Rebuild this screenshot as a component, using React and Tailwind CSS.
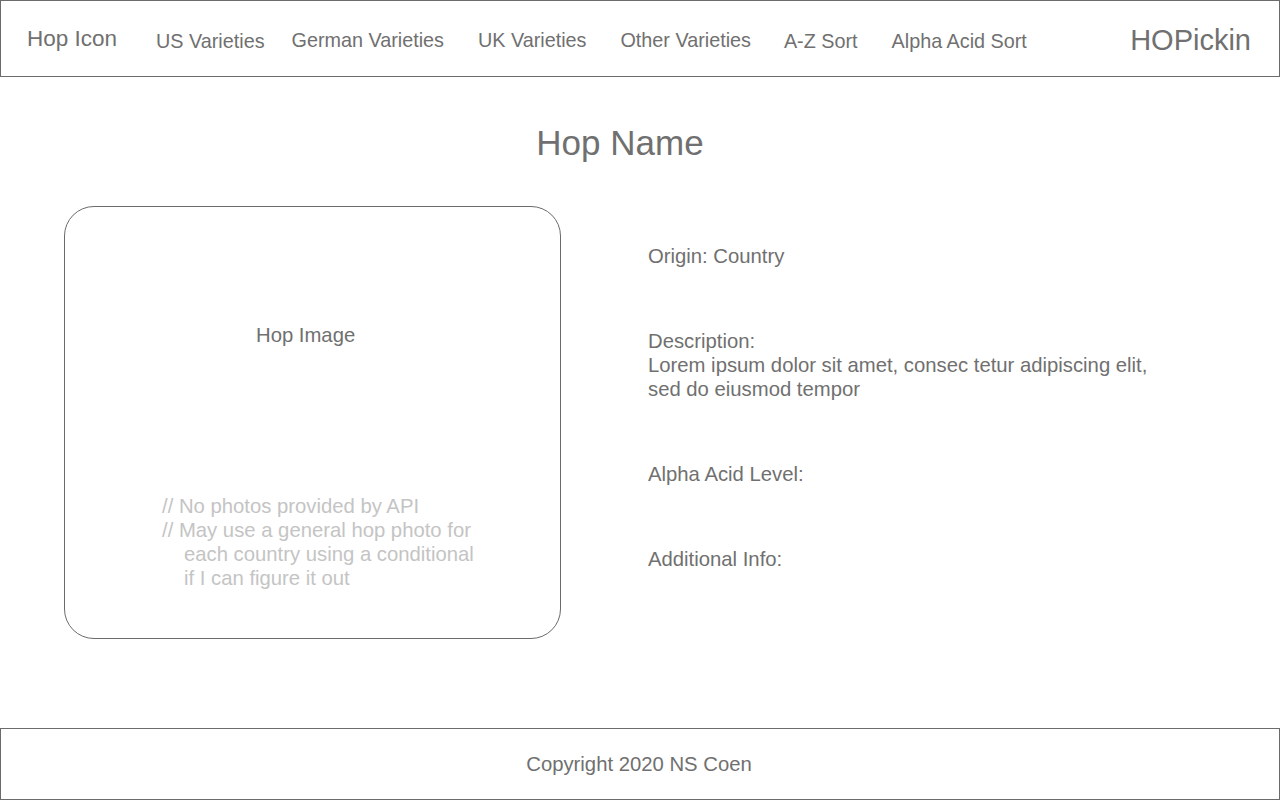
export default function App() {
  const font = { fontFamily: '"Liberation Sans", Arial, sans-serif' };
  return (
    <div className="w-[1280px] h-[800px] bg-white flex flex-col text-[#707070]" style={font}>
      <header className="h-[77px] border border-[#6b6b6b] flex items-center pl-[26px] pr-[28px]">
        <span className="text-[22.5px] leading-none mt-[2px]">Hop Icon</span>
        <nav className="flex items-center ml-[39px] text-[19.8px] leading-none mt-[4px]">
          <span className="mt-[2px]">US Varieties</span>
          <span className="ml-[27px]">German Varieties</span>
          <span className="ml-[34px]">UK Varieties</span>
          <span className="ml-[34px]">Other Varieties</span>
          <span className="ml-[33px] mt-[2px]">A-Z Sort</span>
          <span className="ml-[34px] mt-[2px]">Alpha Acid Sort</span>
        </nav>
        <span className="ml-auto text-[29px] leading-none mt-[3px]">HOPickin</span>
      </header>

      <main className="flex-1 flex flex-col">
        <h1 className="text-[35px] leading-none text-center mt-[48px] pr-[40px]">Hop Name</h1>
        <div className="flex mt-[46px]">
          <div className="ml-[64px] w-[497px] h-[433px] rounded-[30px] border border-[#6b6b6b] flex flex-col">
            <div className="text-[20.3px] leading-[24px] pl-[191px] mt-[116px]">Hop Image</div>
            <div className="text-[20.3px] leading-[24px] text-[#c4c4c4] pl-[97px] mt-[147px]">
              <div>// No photos provided by API</div>
              <div>// May use a general hop photo for</div>
              <div className="pl-[22px]">each country using a conditional</div>
              <div className="pl-[22px]">if I can figure it out</div>
            </div>
          </div>
          <div className="ml-[87px] pt-[38px] flex flex-col gap-[61px] text-[20.3px] leading-[24px]">
            <div>Origin: Country</div>
            <div>
              <div>Description:</div>
              <div>Lorem ipsum dolor sit amet, consec tetur adipiscing elit,</div>
              <div>sed do eiusmod tempor</div>
            </div>
            <div>Alpha Acid Level:</div>
            <div>Additional Info:</div>
          </div>
        </div>
      </main>

      <footer className="h-[72px] border border-[#6b6b6b] flex items-center justify-center">
        <span className="text-[20.3px] leading-none pr-[2px]">Copyright 2020 NS Coen</span>
      </footer>
    </div>
  );
}
